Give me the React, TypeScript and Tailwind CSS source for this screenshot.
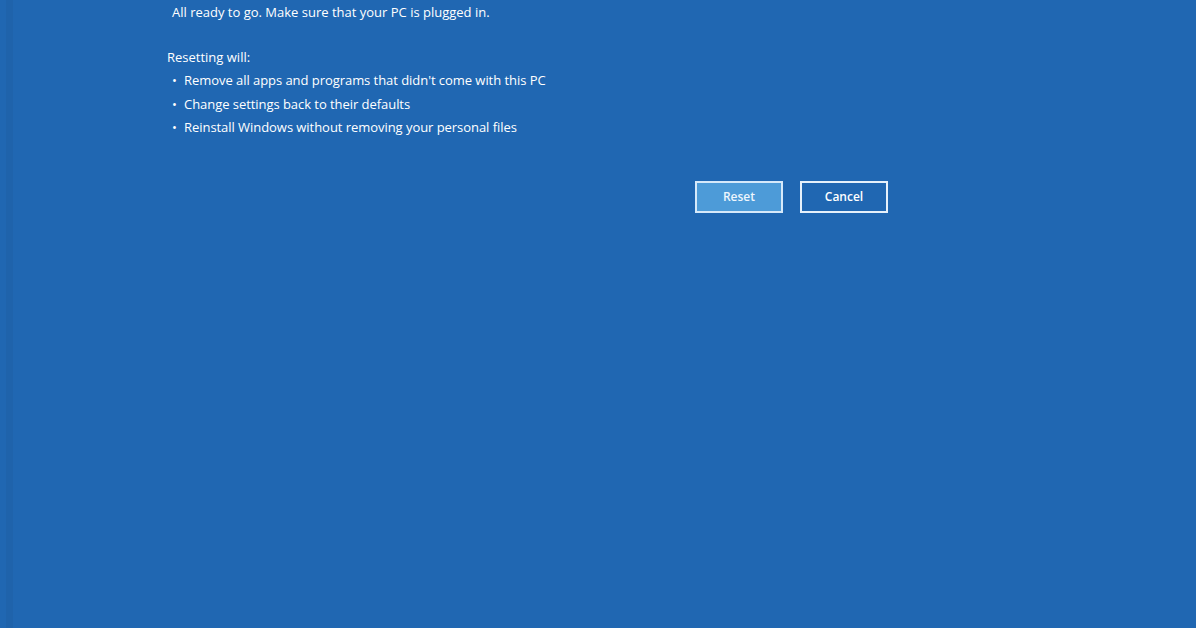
export default function App() {
  const items = [
    "Remove all apps and programs that didn't come with this PC",
    "Change settings back to their defaults",
    "Reinstall Windows without removing your personal files",
  ];

  return (
    <div
      className="h-[628px] w-[1196px] overflow-hidden bg-[#2067b2] text-white"
      style={{ fontFamily: '"Open Sans", "Noto Sans", sans-serif' }}
    >
      <div className="flex h-full">
        <div className="w-[6px] shrink-0" />
        <div className="w-[7px] shrink-0 bg-[#1f63ab]" />
        <div className="flex w-[875px] flex-col pl-[154px]">
          <p className="ml-[5px] mt-[3px] text-[13px] leading-[18px]">
            All ready to go. Make sure that your PC is plugged in.
          </p>

          <p className="mt-[27px] text-[13px] leading-[18px]">Resetting will:</p>
          <ul className="mt-[5px] flex flex-col gap-[5.5px] text-[13px] leading-[18px] tracking-[-0.05px]">
            {items.map((item) => (
              <li key={item} className="flex items-center">
                <span className="ml-[5px] w-[12px]">•</span>
                {item}
              </li>
            ))}
          </ul>

          <div className="mt-[45px] flex justify-end gap-[17px]">
            <button className="h-[32px] w-[88px] border-2 border-[#d6e9fa] bg-[#4d9bd8] text-[12px] font-semibold text-[#eef6fd]">
              Reset
            </button>
            <button className="h-[32px] w-[88px] border-2 border-[#e6f1fb] bg-[#2067b2] text-[12px] font-semibold">
              Cancel
            </button>
          </div>
        </div>
      </div>
    </div>
  );
}
